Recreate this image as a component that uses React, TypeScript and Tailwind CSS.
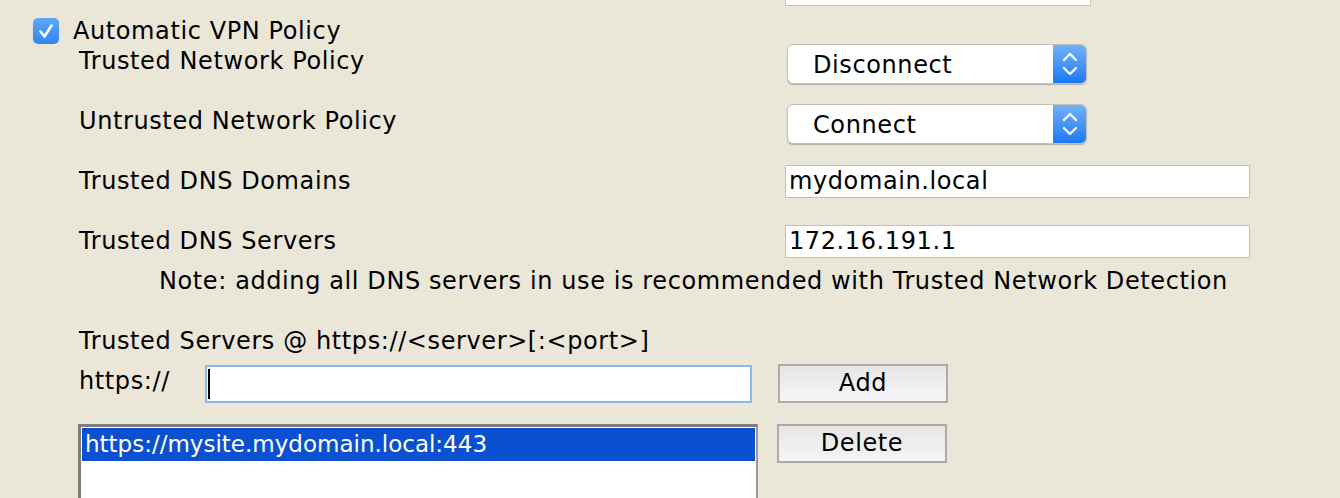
const font = "font-['DejaVu_Sans','Liberation_Sans',sans-serif] tracking-[0.6px]"

function Label({ children, className = '' }: { children: React.ReactNode; className?: string }) {
  return <div className={`leading-[30px] text-[24px] text-black whitespace-nowrap ${className}`}>{children}</div>
}

function PopUp({ value }: { value: string }) {
  return (
    <div className="flex h-[40px] w-[300px] overflow-hidden rounded-[6px] border border-[#c4c1b4] bg-white shadow-[0_1px_1px_rgba(0,0,0,0.25)]">
      <div className="flex-1 pl-[25px] pt-px text-[24px] leading-[38px] text-black">{value}</div>
      <div className="flex w-[33px] items-center justify-center bg-gradient-to-b from-[#6fb1fb] to-[#1778f5]">
        <svg width="16" height="26" viewBox="0 0 16 26" fill="none" stroke="white" strokeWidth="2.4" strokeLinecap="round" strokeLinejoin="round">
          <polyline points="2,9 8,3 14,9" />
          <polyline points="2,17 8,23 14,17" />
        </svg>
      </div>
    </div>
  )
}

function Field({ value }: { value: string }) {
  return (
    <div className="h-[33px] w-[465px] border border-[#c3c1b8] bg-white pl-[3px] text-[24px] leading-[31px] text-black">
      {value}
    </div>
  )
}

function Button({ label }: { label: string }) {
  return (
    <button
      type="button"
      className="h-[39px] w-[170px] border-2 border-[#ababab] bg-gradient-to-b from-[#e6e6e6] to-[#f5f5f5] text-[24px] leading-[33px] text-black"
    >
      {label}
    </button>
  )
}

export default function App() {
  return (
    <div className={`h-[498px] w-[1340px] overflow-hidden bg-[#ebe7d8] ${font}`}>
      <div className="h-[6px] pl-[785px]">
        <div className="h-[6px] w-[306px] border border-t-0 border-[#c8c5b8] bg-white" />
      </div>

      <div className="mt-[10px] flex h-[30px] items-center pl-[33px]">
        <div className="flex h-[26px] w-[26px] items-center justify-center rounded-[5px] bg-gradient-to-b from-[#5ea6f8] to-[#2f86f1]">
          <svg width="26" height="26" viewBox="0 0 26 26" fill="none" stroke="white" strokeWidth="2.6" strokeLinecap="round" strokeLinejoin="round">
            <polyline points="7.5,13.5 11.5,18.5 18.5,7.5" />
          </svg>
        </div>
        <Label className="ml-[14px]">Automatic VPN Policy</Label>
      </div>

      <div className="flex h-[60px]">
        <Label className="w-[787px] pl-[79px]">Trusted Network Policy</Label>
        <div className="mt-[-2px]">
          <PopUp value="Disconnect" />
        </div>
      </div>

      <div className="flex h-[60px]">
        <Label className="w-[787px] pl-[79px]">Untrusted Network Policy</Label>
        <div className="mt-[-2px]">
          <PopUp value="Connect" />
        </div>
      </div>

      <div className="flex h-[60px]">
        <Label className="w-[785px] pl-[79px]">Trusted DNS Domains</Label>
        <div className="mt-[-1px]">
          <Field value="mydomain.local" />
        </div>
      </div>

      <div className="flex h-[40px]">
        <Label className="w-[785px] pl-[79px]">Trusted DNS Servers</Label>
        <div className="mt-[-1px]">
          <Field value="172.16.191.1" />
        </div>
      </div>

      <Label className="pl-[159px]">
        Note: adding all DNS servers in use is recommended with Trusted Network Detection
      </Label>

      <Label className="mt-[30px] pl-[79px]">{'Trusted Servers @ https://<server>[:<port>]'}</Label>

      <div className="mt-[10px] flex h-[58px] items-start">
        <Label className="w-[205px] pl-[79px]">https://</Label>
        <div className="mt-[-1px] flex h-[38px] w-[547px] items-center border-2 border-[#8ab8ea] bg-white pl-[1px]">
          <div className="h-[30px] w-[2px] bg-black" />
        </div>
        <div className="ml-[26px] mt-[-2px]">
          <Button label="Add" />
        </div>
      </div>

      <div className="flex items-start pl-[78px]">
        <div className="h-[80px] w-[680px] border-l-[3px] border-t-[3px] border-r-2 border-l-[#7e7e7e] border-t-[#7e7e7e] border-r-[#9a9a9a] bg-white pl-px pr-[1px] pt-px">
          <div className="h-[33px] bg-[#0b50d0] pl-[3px] text-[23px] leading-[33px] tracking-normal text-white">
            https://mysite.mydomain.local:443
          </div>
        </div>
        <div className="ml-[19px]">
          <Button label="Delete" />
        </div>
      </div>
    </div>
  )
}
